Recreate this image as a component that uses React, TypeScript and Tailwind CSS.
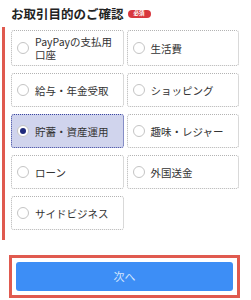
import React from 'react';

type Option = { id: string; label: React.ReactNode };

const options: Option[] = [
    { id: 'paypay', label: (<>PayPayの支払用<br />口座</>) },
    { id: 'living', label: '生活費' },
    { id: 'salary', label: '給与・年金受取' },
    { id: 'shopping', label: 'ショッピング' },
    { id: 'saving', label: '貯蓄・資産運用' },
    { id: 'hobby', label: '趣味・レジャー' },
    { id: 'loan', label: 'ローン' },
    { id: 'remit', label: '外国送金' },
    { id: 'side', label: 'サイドビジネス' },
];

export default function App() {
    const [selected, setSelected] = React.useState('saving');

    return (
        <main className="w-[251px] h-[300px] bg-white overflow-hidden font-['Noto_Sans_CJK_JP',sans-serif] text-[#333]">
            <div className="flex items-center h-[22px] mt-[3px] pl-[11px]">
                <h2 className="text-[12.5px] font-bold leading-none text-[#222]">お取引目的のご確認</h2>
                <span className="ml-[4px] w-[23px] h-[8px] rounded-full bg-[#d8373e] text-white text-[5.5px] font-bold leading-none flex items-center justify-center">必須</span>
            </div>

            <div className="mt-[2px] ml-[2px] w-[237px] border-l-[3px] border-[#e05a4f] pl-[6px] pt-[3px] pb-[10px]">
                <div className="grid grid-cols-2 gap-x-[3px] gap-y-[7px]">
                    {options.map((o) => {
                        const active = o.id === selected;
                        return (
                            <button
                                key={o.id}
                                onClick={() => setSelected(o.id)}
                                className={
                                    active
                                        ? 'flex items-center gap-[6px] min-h-[34px] py-[4px] pl-[5px] pr-[4px] text-left rounded-[3px] border border-dotted border-[#3a46a0] bg-[#d0d4ed]'
                                        : 'flex items-center gap-[6px] min-h-[34px] py-[4px] pl-[5px] pr-[4px] text-left rounded-[3px] border border-dotted border-[#b3b3b3] bg-white'
                                }
                            >
                                <span className="shrink-0 w-[12px] h-[12px] rounded-full border border-[#c4c4c4] bg-white flex items-center justify-center">
                                    {active && <span className="w-[6px] h-[6px] rounded-full bg-[#1f2a7c]"></span>}
                                </span>
                                <span className="text-[10.5px] leading-[13px]">{o.label}</span>
                            </button>
                        );
                    })}
                </div>
            </div>

            <div className="mt-[15px] ml-[9px] w-[231px] border-[3px] border-[#e05a4f] p-[4px]">
                <button className="w-full h-[29px] rounded-[3px] bg-[#3d8ef6] text-[#d3e5fd] text-[11px] leading-none flex items-center justify-center">次へ</button>
            </div>
        </main>
    );
}
